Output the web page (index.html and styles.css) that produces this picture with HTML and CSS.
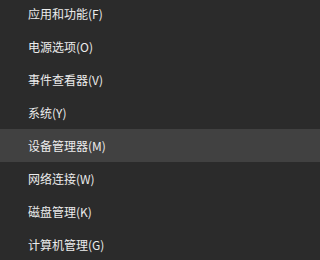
FILE: index.html
```html
<!DOCTYPE html>
<html lang="zh-CN">
<head>
<meta charset="utf-8">
<link rel="stylesheet" href="styles.css">
</head>
<body>
<ul class="menu">
  <li class="item">应用和功能(F)</li>
  <li class="item">电源选项(O)</li>
  <li class="item">事件查看器(V)</li>
  <li class="item">系统(Y)</li>
  <li class="item active">设备管理器(M)</li>
  <li class="item">网络连接(W)</li>
  <li class="item">磁盘管理(K)</li>
  <li class="item">计算机管理(G)</li>
</ul>
</body>
</html>
```
FILE: styles.css
```css
html, body {
  margin: 0;
  padding: 0;
  background: #2b2b2b;
  height: 100%;
  overflow: hidden;
}
.menu {
  list-style: none;
  margin: -3px 0 0 0;
  padding: 0;
  display: flex;
  flex-direction: column;
}
.item {
  height: 33px;
  display: flex;
  align-items: center;
  padding-left: 28px;
  font-family: "Noto Sans CJK SC", "Noto Sans", sans-serif;
  font-size: 12px;
  color: #ececec;
  white-space: nowrap;
}
.item.active {
  background: #414141;
}
```
